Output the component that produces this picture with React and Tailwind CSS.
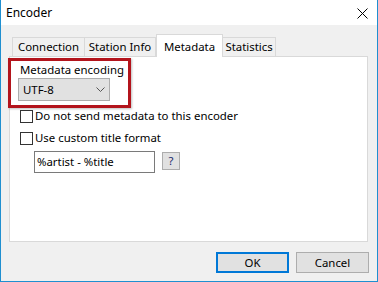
const Tab = ({ label, className }) => (
  <div
    className={`h-[19px] mb-[1px] flex items-center justify-center border-t border-[#d9d9d9] bg-[#f0f0f0] ${className}`}
  >
    {label}
  </div>
);

const Checkbox = ({ label }) => (
  <div className="flex items-center h-[16px] ml-[2px]">
    <div className="w-[13px] h-[13px] border border-[#333333] bg-white shrink-0" />
    <span className="ml-[2px] leading-[16px]">{label}</span>
  </div>
);

export default function App() {
  return (
    <div
      className="relative w-[378px] h-[282px] flex flex-col border-l border-r border-b border-[#1f8fd0] bg-[#f0f0f0] text-[11.4px] text-black overflow-hidden"
      style={{ fontFamily: '"Segoe UI", "Noto Sans", sans-serif' }}
    >
      {/* title bar */}
      <div className="h-[25px] bg-white flex items-center justify-between pl-[5px] pr-[9px] shrink-0">
        <span className="leading-[16px] text-[12px]">Encoder</span>
        <svg width="11" height="11" viewBox="0 0 11 11" className="mt-[1px]">
          <path d="M0.5 0.5 L10.5 10.5 M10.5 0.5 L0.5 10.5" stroke="#000" strokeWidth="1" />
        </svg>
      </div>

      {/* tabs */}
      <div className="flex items-end h-[23px] mt-[9px] ml-[11px] -mb-px relative z-10 shrink-0">
        <Tab label="Connection" className="w-[73px] border-l border-r" />
        <Tab label="Station Info" className="w-[71px] border-r" />
        <div className="w-[67px] h-[23px] flex items-start justify-center pt-[3px] border-l border-t border-r border-[#d9d9d9] bg-white">
          Metadata
        </div>
        <Tab label="Statistics" className="w-[53px] border-r" />
      </div>

      {/* panel */}
      <div className="ml-[8px] mr-[9px] h-[186px] border border-[#d9d9d9] bg-white pt-[5px] pl-[8px] flex flex-col shrink-0">
        <div className="ml-[2px] leading-[15px] h-[15px]">Metadata encoding</div>
        <div className="mt-[1px] w-[92px] h-[23px] bg-[#e1e1e1] border border-[#adadad] flex items-center justify-between pl-[4px] pr-[4px]">
          <span>UTF-8</span>
          <svg width="9" height="5" viewBox="0 0 9 5">
            <path d="M0.5 0.5 L4.5 4.5 L8.5 0.5" stroke="#555" strokeWidth="1" fill="none" />
          </svg>
        </div>
        <div className="mt-[7px]">
          <Checkbox label="Do not send metadata to this encoder" />
        </div>
        <div className="mt-[6px]">
          <Checkbox label="Use custom title format" />
        </div>
        <div className="mt-[5px] ml-[16px] flex items-start">
          <div className="w-[121px] h-[22px] border border-[#7a7a7a] bg-white flex items-center pl-[2px]">
            %artist - %title
          </div>
          <div className="ml-[7px] mt-[1px] w-[18px] h-[18px] border border-[#adadad] bg-[#e1e1e1] flex items-center justify-center text-[#1a2a6c]">
            ?
          </div>
        </div>
      </div>

      {/* buttons */}
      <div className="flex justify-end gap-[7px] mt-[10px] mr-[8px]">
        <div className="w-[73px] h-[21px] border-2 border-[#0078d7] bg-[#e1e1e1] flex items-center justify-center">
          OK
        </div>
        <div className="w-[73px] h-[21px] border border-[#adadad] bg-[#e1e1e1] flex items-center justify-center">
          Cancel
        </div>
      </div>

      {/* annotation highlight */}
      <div className="absolute left-[7px] top-[58px] w-[123px] h-[50px] border-[3px] border-[#b3141c] shadow-[1px_1px_2px_rgba(0,0,0,0.25)]" />
    </div>
  );
}
